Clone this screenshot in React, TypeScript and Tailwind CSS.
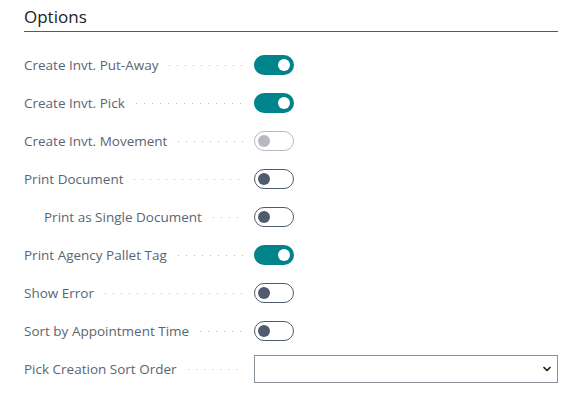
import { useState } from 'react'
import { ChevronDown } from 'lucide-react'

type Row = {
  label: string
  kind: 'toggle' | 'select'
  on?: boolean
  disabled?: boolean
  indent?: boolean
}

const rows: Row[] = [
  { label: 'Create Invt. Put-Away', kind: 'toggle', on: true },
  { label: 'Create Invt. Pick', kind: 'toggle', on: true },
  { label: 'Create Invt. Movement', kind: 'toggle', disabled: true },
  { label: 'Print Document', kind: 'toggle' },
  { label: 'Print as Single Document', kind: 'toggle', indent: true },
  { label: 'Print Agency Pallet Tag', kind: 'toggle', on: true },
  { label: 'Show Error', kind: 'toggle' },
  { label: 'Sort by Appointment Time', kind: 'toggle' },
  { label: 'Pick Creation Sort Order', kind: 'select' },
]

function Toggle({ on, disabled }: { on?: boolean; disabled?: boolean }) {
  if (on) {
    return (
      <div className="w-10 h-5 rounded-full bg-[#00838a] flex items-center justify-end px-[4px]">
        <div className="w-3 h-3 rounded-full bg-white" />
      </div>
    )
  }
  return (
    <div
      className={`w-10 h-5 rounded-full border flex items-center px-[3px] ${
        disabled ? 'border-[#b6b9bf]' : 'border-[#505c6d]'
      }`}
    >
      <div className={`w-3 h-3 rounded-full ${disabled ? 'bg-[#b6b9bf]' : 'bg-[#505c6d]'}`} />
    </div>
  )
}

export default function App() {
  const [sort, setSort] = useState('')
  return (
    <div className="w-[583px] h-[400px] bg-white px-6 pt-[5px] font-['Segoe_UI','Open_Sans',sans-serif] text-[#5a6573]">
      <h2 className="text-[17px] font-medium text-[#212121] leading-[24px] pb-[2px] border-b border-[#505c6d] w-[534px]">
        Options
      </h2>
      <div className="pt-[14px] flex flex-col">
        {rows.map((r) => (
          <div key={r.label} className="flex items-center h-[38px]">
            <div className={`w-[219px] flex items-center ${r.indent ? 'pl-5' : ''}`}>
              <span className="text-[13.5px] whitespace-nowrap">{r.label}</span>
              <span className="flex-1 ml-[11px] h-px bg-[linear-gradient(to_right,#b9bdc3_1px,transparent_1px)] bg-[length:8px_1px] bg-repeat-x" />
            </div>
            <div className="ml-[11px]">
              {r.kind === 'toggle' ? (
                <Toggle on={r.on} disabled={r.disabled} />
              ) : (
                <div className="relative w-[304px] h-[28px]">
                  <select
                    value={sort}
                    onChange={(e) => setSort(e.target.value)}
                    className="appearance-none w-full h-full border border-[#8a929b] bg-white text-[13px] text-[#212121] px-2 outline-none"
                  >
                    <option value="" />
                    <option value="item">Item</option>
                    <option value="shelf">Shelf or Bin</option>
                  </select>
                  <ChevronDown
                    size={12}
                    strokeWidth={3.5}
                    className="absolute right-[5px] top-[8px] text-[#212121] pointer-events-none"
                  />
                </div>
              )}
            </div>
          </div>
        ))}
      </div>
    </div>
  )
}
